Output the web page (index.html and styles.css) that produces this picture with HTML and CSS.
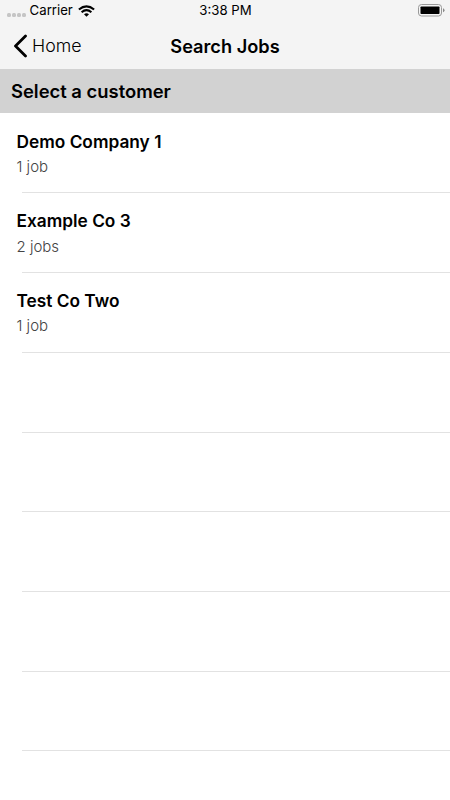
FILE: index.html
```html
<!DOCTYPE html>
<html lang="en">
<head>
<meta charset="utf-8">
<title>Search Jobs</title>
<link rel="stylesheet" href="styles.css">
</head>
<body>
<header class="top">
  <div class="status">
    <div class="carrier">
      <span class="dots"><i></i><i></i><i></i><i></i></span>
      <span class="carrier-name">Carrier</span>
      <svg class="wifi" width="17" height="12" viewBox="0 0 17 12" fill="none" stroke="#000" stroke-width="2.1"><path d="M.9 4.5Q8.5-1.9 16.1 4.5M3.6 7.3Q8.5 3.1 13.4 7.3"/><path d="M6 9.3Q8.5 7.3 11 9.3L8.5 11.8Z" fill="#000" stroke="none"/></svg>
    </div>
    <span class="clock">3:38 PM</span>
    <svg class="battery" width="27" height="13" viewBox="0 0 27 13"><rect x=".5" y=".5" width="23" height="11.5" rx="3" fill="none" stroke="#999"/><rect x="2.5" y="2.5" width="19" height="7.5" rx=".8"/><path d="M25 4.2q1.5.5 1.5 2t-1.5 2z" fill="#888"/></svg>
  </div>
  <nav class="nav">
    <a class="back"><svg width="14" height="24" viewBox="0 0 14 24" fill="none" stroke="#000" stroke-width="2.8" stroke-linecap="round" stroke-linejoin="round"><path d="M12.5 2 2.5 12l10 10"/></svg><span>Home</span></a>
    <h1>Search Jobs</h1>
  </nav>
</header>
<h2 class="section">Select a customer</h2>
<ul class="list">
  <li><strong>Demo Company 1</strong><span>1 job</span></li>
  <li><strong>Example Co 3</strong><span>2 jobs</span></li>
  <li><strong>Test Co Two</strong><span>1 job</span></li>
  <li></li><li></li><li></li><li></li><li></li>
</ul>
</body>
</html>
```
FILE: styles.css
```css
* { box-sizing: border-box; }
body { margin: 0; height: 800px; overflow: hidden; background: #fff; color: #000; font-family: Inter, "Liberation Sans", sans-serif; }
.top { height: 69px; background: #f4f4f4; }
.status { height: 22px; display: grid; grid-template-columns: 1fr auto 1fr; align-items: center; padding: 0 5px 0 6px; font-size: 13.2px; line-height: 22px; }
.carrier { display: flex; align-items: center; }
.carrier-name, .clock { position: relative; top: -.6px; }
.dots { display: flex; gap: 1px; margin: 7px 4px 0 .6px; }
.dots i { width: 4px; height: 4px; border-radius: 1.5px; background: #c5c5c5; }
.wifi { margin: -1px 0 0 5px; }
.battery { justify-self: end; margin-top: -1px; }
.nav { height: 48px; display: grid; grid-template-columns: 1fr auto 1fr; align-items: center; padding: 0 13px; }
.back { display: flex; align-items: center; gap: 5px; font-size: 17.8px; font-weight: 300; }
.back span { margin-top: -1px; }
h1 { margin: -1px 0 0; font-size: 18.2px; font-weight: 600; }
.section { margin: 0; height: 44px; padding-left: 11px; background: #d2d2d2; font-size: 18.4px; line-height: 45px; font-weight: 600; }
.list { list-style: none; margin: 0; padding: .65px 0 0; }
.list li { height: 79.72px; padding: 16px 0 0 16.5px; background: linear-gradient(#e2e2e2, #e2e2e2) 22px 100% / 100% 1px no-repeat; }
.list strong, .list span { display: block; }
.list strong { font-size: 17.3px; line-height: 23px; font-weight: 600; }
.list span { margin-top: 4.4px; font-size: 15px; line-height: 20px; font-weight: 300; color: #444; }
```
